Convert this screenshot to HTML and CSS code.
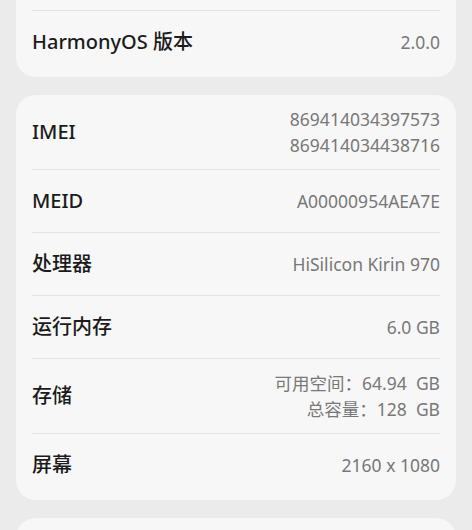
FILE: index.html
```html
<!DOCTYPE html>
<html lang="zh-CN">
<head>
<meta charset="utf-8">
<link rel="stylesheet" href="styles.css">
</head>
<body>
<div class="page">
  <div class="card card-first">
    <div class="spacer"></div>
    <div class="row">
      <div class="label">HarmonyOS 版本</div>
      <div class="value">2.0.0</div>
    </div>
  </div>
  <div class="card">
    <div class="row">
      <div class="label">IMEI</div>
      <div class="value">869414034397573<br>869414034438716</div>
    </div>
    <div class="row">
      <div class="label">MEID</div>
      <div class="value">A00000954AEA7E</div>
    </div>
    <div class="row">
      <div class="label">处理器</div>
      <div class="value">HiSilicon Kirin 970</div>
    </div>
    <div class="row">
      <div class="label">运行内存</div>
      <div class="value">6.0 GB</div>
    </div>
    <div class="row">
      <div class="label">存储</div>
      <div class="value">可用空间：64.94&nbsp; GB<br>总容量：128&nbsp; GB</div>
    </div>
    <div class="row">
      <div class="label">屏幕</div>
      <div class="value">2160 x 1080</div>
    </div>
  </div>
  <div class="card card-last"></div>
</div>
</body>
</html>
```
FILE: styles.css
```css
html, body {
  margin: 0;
  padding: 0;
  background: #ebebeb;
}
body {
  font-family: "Noto Sans", "Noto Sans CJK SC", sans-serif;
  height: 530px;
  overflow: hidden;
}
.page {
  display: flex;
  flex-direction: column;
  gap: 18px;
  padding: 0 16px;
}
.card {
  background: #f7f7f7;
  border-radius: 20px;
  padding: 0 16px 4px;
}
.card-first {
  margin-top: -30px;
}
.spacer {
  height: 40px;
}
.row {
  display: flex;
  justify-content: space-between;
  align-items: center;
  min-height: 63px;
  box-sizing: border-box;
  padding: 11px 0;
  border-top: 1px solid #e3e3e3;
}
.card .row:first-child {
  border-top: none;
}
.label {
  font-size: 20px;
  font-weight: 500;
  color: #1b1b1b;
  line-height: 26px;
}
.value {
  font-size: 17.5px;
  color: #787878;
  line-height: 26px;
  text-align: right;
}
.card-last {
  height: 60px;
}
```
